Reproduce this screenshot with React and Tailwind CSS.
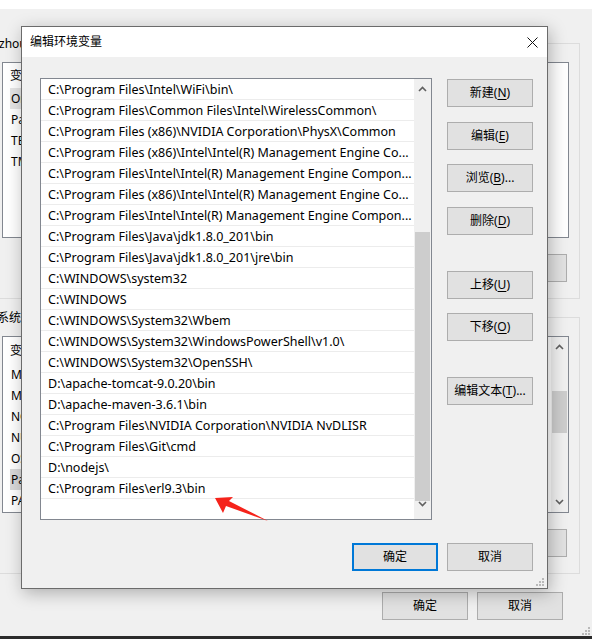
import React from 'react';

const PATH_ITEMS = [
  'C:\\Program Files\\Intel\\WiFi\\bin\\',
  'C:\\Program Files\\Common Files\\Intel\\WirelessCommon\\',
  'C:\\Program Files (x86)\\NVIDIA Corporation\\PhysX\\Common',
  'C:\\Program Files (x86)\\Intel\\Intel(R) Management Engine Co...',
  'C:\\Program Files\\Intel\\Intel(R) Management Engine Compon...',
  'C:\\Program Files (x86)\\Intel\\Intel(R) Management Engine Co...',
  'C:\\Program Files\\Intel\\Intel(R) Management Engine Compon...',
  'C:\\Program Files\\Java\\jdk1.8.0_201\\bin',
  'C:\\Program Files\\Java\\jdk1.8.0_201\\jre\\bin',
  'C:\\WINDOWS\\system32',
  'C:\\WINDOWS',
  'C:\\WINDOWS\\System32\\Wbem',
  'C:\\WINDOWS\\System32\\WindowsPowerShell\\v1.0\\',
  'C:\\WINDOWS\\System32\\OpenSSH\\',
  'D:\\apache-tomcat-9.0.20\\bin',
  'D:\\apache-maven-3.6.1\\bin',
  'C:\\Program Files\\NVIDIA Corporation\\NVIDIA NvDLISR',
  'C:\\Program Files\\Git\\cmd',
  'D:\\nodejs\\',
  'C:\\Program Files\\erl9.3\\bin',
];

const USER_VARS = ['OneDrive', 'Path', 'TEMP', 'TMP'];
const SYSTEM_VARS = ['MAVEN_HOME', 'MYSQL_HOME', 'NODE_PATH', 'NUMBER_OF_PROCESSORS', 'OS', 'Path', 'PATHEXT'];

const Chevron = ({ down }) => (
  <svg width="9" height="6" viewBox="0 0 9 6">
    <polyline
      points={down ? '1,1 4.5,4.5 8,1' : '1,5 4.5,1.5 8,5'}
      fill="none"
      stroke="#606060"
      strokeWidth="1.6"
    />
  </svg>
);

const Mnemonic = ({ before, letter, after = ')' }) => (
  <span>
    {before}(<span className="underline underline-offset-2">{letter}</span>{after}
  </span>
);

const WinButton = ({ children, className = '', isDefault }) => (
  <div
    className={`w-[86px] h-[28px] flex items-center justify-center bg-[#e1e1e1] text-[12px] text-black ${
      isDefault ? 'border-2 border-[#0078d7]' : 'border border-[#adadad]'
    } ${className}`}
  >
    {children}
  </div>
);

const Grip = ({ className }) => (
  <svg className={className} width="8" height="8" viewBox="0 0 8 8">
    <rect x="6" y="0" width="2" height="2" fill="#b9b9b9" />
    <rect x="3" y="3" width="2" height="2" fill="#b9b9b9" />
    <rect x="6" y="3" width="2" height="2" fill="#b9b9b9" />
    <rect x="0" y="6" width="2" height="2" fill="#b9b9b9" />
    <rect x="3" y="6" width="2" height="2" fill="#b9b9b9" />
    <rect x="6" y="6" width="2" height="2" fill="#b9b9b9" />
  </svg>
);

const VarList = ({ items, selected, headerHeight, selectedTone, withScrollbar, className }) => (
  <div className={`flex bg-white border border-[#828790] overflow-hidden ${className}`}>
    <div className="flex-1 flex flex-col">
      <div className={`${headerHeight} flex items-center pl-[7px]`}>变量</div>
      {items.map((name, index) => (
        <div key={name + index} className="h-[21px] flex items-center pl-[7px]">
          <div className={`w-[528px] h-full flex items-center pl-[1px] ${index === selected ? selectedTone : ''}`}>
            {name}
          </div>
        </div>
      ))}
    </div>
    {withScrollbar && (
      <div className="w-[17px] flex flex-col items-center bg-[#f0f0f0]">
        <div className="h-[20px] flex items-center">
          <Chevron />
        </div>
        <div className="mt-[34px] w-[15px] h-[42px] bg-[#cdcdcd]" />
        <div className="flex-1" />
        <div className="h-[20px] flex items-center">
          <Chevron down />
        </div>
      </div>
    )}
  </div>
);

const EditPathDialog = () => (
  <div className="absolute left-[21px] top-[26px] w-[527px] h-[563px] flex flex-col bg-[#f0f0f0] border border-[#6b6b6b] shadow-[2px_4px_16px_rgba(0,0,0,0.28)]">
    <div className="h-[30px] shrink-0 bg-white flex items-center justify-between pl-[8px] pr-[9px]">
      <span className="text-[12px] text-black">编辑环境变量</span>
      <svg width="11" height="11" viewBox="0 0 11 11">
        <path d="M0.5 0.5 L10.5 10.5 M10.5 0.5 L0.5 10.5" stroke="#111" strokeWidth="1" />
      </svg>
    </div>

    <div className="flex pt-[21px] pl-[18px]">
      <div className="w-[392px] h-[442px] flex bg-white border border-[#828790]">
        <div className="flex-1 flex flex-col">
          {PATH_ITEMS.map((item) => (
            <div
              key={item}
              className="h-[21px] shrink-0 flex items-center pt-[2px] pl-[7px] border-b border-[#ececec] text-[12.5px] text-black whitespace-nowrap overflow-hidden"
            >
              {item}
            </div>
          ))}
        </div>
        <div className="w-[17px] flex flex-col items-center bg-[#f0f0f0]">
          <div className="h-[20px] flex items-center">
            <Chevron />
          </div>
          <div className="mt-[133px] w-[15px] h-[269px] bg-[#cdcdcd]" />
          <div className="flex-1" />
          <div className="h-[18px] flex items-start">
            <Chevron down />
          </div>
        </div>
      </div>

      <div className="ml-[15px] flex flex-col">
        <WinButton className="mt-[1px]">
          <Mnemonic before="新建" letter="N" />
        </WinButton>
        <WinButton className="mt-[15px]">
          <Mnemonic before="编辑" letter="E" />
        </WinButton>
        <WinButton className="mt-[14px]">
          <Mnemonic before="浏览" letter="B" after=")..." />
        </WinButton>
        <WinButton className="mt-[15px]">
          <Mnemonic before="删除" letter="D" />
        </WinButton>
        <WinButton className="mt-[36px]">
          <Mnemonic before="上移" letter="U" />
        </WinButton>
        <WinButton className="mt-[14px]">
          <Mnemonic before="下移" letter="O" />
        </WinButton>
        <WinButton className="mt-[36px]">
          <Mnemonic before="编辑文本" letter="T" after=")..." />
        </WinButton>
      </div>
    </div>

    <div className="flex justify-end gap-[9px] pr-[14px] mt-[23px]">
      <WinButton isDefault>确定</WinButton>
      <WinButton>取消</WinButton>
    </div>

    <Grip className="absolute right-[3px] bottom-[2px]" />
  </div>
);

export default function App() {
  return (
    <div className="relative w-[592px] h-[639px] overflow-hidden bg-[#f0f0f0] flex flex-col text-[12px] text-black font-['Noto_Sans','Noto_Sans_CJK_SC',sans-serif]">
      <div className="h-[9px] shrink-0 bg-white" />

      {/* background: 环境变量 window */}
      <div className="relative shrink-0 mt-[34px] ml-[-10px] w-[590px] h-[256px] border border-[#dcdcdc]">
        <span className="absolute left-[8px] top-[-9px] bg-[#f0f0f0] pr-[2px]">zhou 的用户变量(U)</span>
        <VarList
          items={USER_VARS}
          selected={0}
          headerHeight="h-[25px]"
          selectedTone="bg-[#e5e5e5]"
          className="mt-[18px] ml-[11px] w-[567px] h-[176px]"
        />
        <div className="mt-[16px] pr-[12px] flex justify-end gap-[10px]">
          <WinButton>新建(N)...</WinButton>
          <WinButton>编辑(E)...</WinButton>
          <WinButton className="w-[70px]">删除(D)</WinButton>
        </div>
      </div>

      <div className="relative shrink-0 mt-[18px] ml-[-10px] w-[590px] h-[257px] border border-[#dcdcdc]">
        <span className="absolute left-[6px] top-[-9px] bg-[#f0f0f0] pr-[2px]">系统变量(S)</span>
        <VarList
          items={SYSTEM_VARS}
          selected={5}
          headerHeight="h-[27px]"
          selectedTone="bg-[#d9d9d9]"
          withScrollbar
          className="mt-[18px] ml-[11px] w-[567px] h-[177px]"
        />
        <div className="mt-[16px] pr-[12px] flex justify-end gap-[10px]">
          <WinButton>新建(W)...</WinButton>
          <WinButton>编辑(I)...</WinButton>
          <WinButton className="w-[70px]">删除(L)</WinButton>
        </div>
      </div>

      <div className="mt-[18px] pr-[29px] flex justify-end gap-[9px]">
        <WinButton>确定</WinButton>
        <WinButton>取消</WinButton>
      </div>

      <div className="mt-auto flex justify-end pr-[2px] pb-[1px]">
        <Grip />
      </div>
      <div className="h-[3px] shrink-0 bg-[#2b2b2b]" />

      <EditPathDialog />

      {/* annotation arrow */}
      <svg className="absolute left-[210px] top-[490px]" width="62" height="34" viewBox="0 0 62 34">
        <polygon points="5,8 23,7 19,11 58,31 16,16 13,23" fill="#f5231b" />
      </svg>
    </div>
  );
}
